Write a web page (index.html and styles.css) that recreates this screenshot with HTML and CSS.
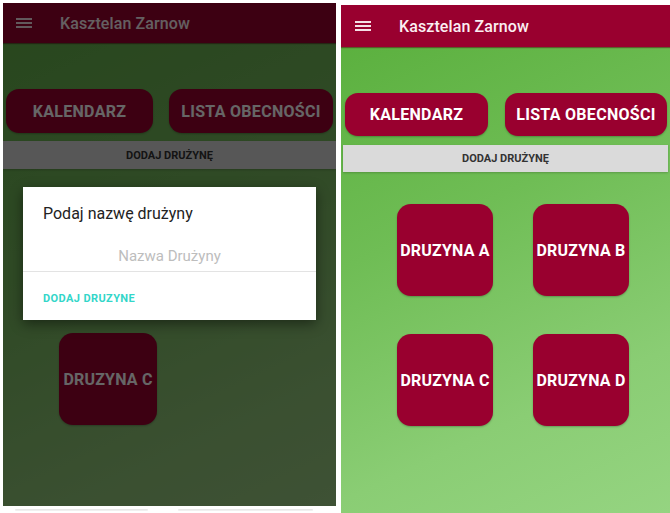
FILE: index.html
```html
<!DOCTYPE html>
<html lang="pl">
<head>
<meta charset="utf-8">
<title>Kasztelan Zarnow</title>
<link rel="stylesheet" href="styles.css">
</head>
<body>
<div class="stage">
  <div class="col-left">
    <div class="phone phone--dim">
      <header class="appbar">
        <span class="menu"><i></i><i></i><i></i></span>
        <span class="appbar-title">Kasztelan Zarnow</span>
      </header>
      <div class="actions">
        <div class="pill pill--cal">KALENDARZ</div>
        <div class="pill pill--list">LISTA OBECNOŚCI</div>
      </div>
      <div class="add-bar">DODAJ DRUŻYNĘ</div>
      <div class="teams">
        <div class="tile tile--covered"></div>
        <div class="tile tile--covered"></div>
        <div class="tile">DRUZYNA C</div>
      </div>
      <div class="scrim"></div>
      <div class="dialog">
        <div class="dialog-title">Podaj nazwę drużyny</div>
        <div class="dialog-input">Nazwa Drużyny</div>
        <div class="dialog-action">DODAJ DRUZYNE</div>
      </div>
    </div>
    <div class="under">
      <span class="under-line under-line--a"></span>
      <span class="under-line under-line--b"></span>
    </div>
  </div>

  <div class="phone phone--bright">
    <header class="appbar">
      <span class="menu"><i></i><i></i><i></i></span>
      <span class="appbar-title">Kasztelan Zarnow</span>
    </header>
    <div class="actions">
      <div class="pill pill--cal">KALENDARZ</div>
      <div class="pill pill--list">LISTA OBECNOŚCI</div>
    </div>
    <div class="add-bar">DODAJ DRUŻYNĘ</div>
    <div class="teams">
      <div class="tile">DRUZYNA A</div>
      <div class="tile">DRUZYNA B</div>
      <div class="tile">DRUZYNA C</div>
      <div class="tile">DRUZYNA D</div>
    </div>
  </div>
</div>
</body>
</html>
```
FILE: styles.css
```css
* { box-sizing: border-box; }

html, body {
  margin: 0;
  padding: 0;
  background: #ffffff;
  font-family: Roboto, "Liberation Sans", Arial, sans-serif;
  overflow: hidden;
}

.stage {
  display: flex;
  align-items: flex-start;
  width: 670px;
  height: 513px;
}

.col-left {
  display: flex;
  flex-direction: column;
  margin: 3px 0 0 3px;
  width: 333px;
}

.phone {
  position: relative;
  display: flex;
  flex-direction: column;
  overflow: hidden;
  background: linear-gradient(155deg, #58ae3b 0%, #6fbd55 40%, #8acd74 75%, #95d481 100%);
}

.phone--dim {
  width: 333px;
  height: 503px;
  --bar-h: 40px;
  --act-top: 46px;
  --act-pad: 3px;
  --act-gap: 16px;
  --pill-h: 44px;
  --cal-w: 147px;
  --list-w: 164px;
  --add-top: 8px;
  --add-h: 28px;
  --add-mx: 0px;
  --teams-top: 34px;
  --tile-w: 98px;
  --tile-gap-x: 38px;
  --menu-left: 13px;
  background: linear-gradient(155deg, #62b049 0%, #78b95f 45%, #92c77a 80%, #9ccc85 100%);
}

.phone--bright {
  width: 329px;
  height: 508px;
  margin: 5px 0 0 5px;
  --bar-h: 42px;
  --act-top: 46px;
  --act-pad: 4px;
  --act-gap: 17px;
  --pill-h: 43px;
  --cal-w: 143px;
  --list-w: 162px;
  --add-top: 9px;
  --add-h: 27px;
  --add-mx: 2px;
  --teams-top: 32px;
  --tile-w: 96px;
  --tile-gap-x: 40px;
  --menu-left: 14px;
}

.appbar {
  height: var(--bar-h);
  flex: none;
  display: flex;
  align-items: center;
  background: #99002f;
  box-shadow: 0 1px 1px rgba(80, 30, 20, 0.55);
  color: #fbeef2;
  position: relative;
  z-index: 1;
}

.menu {
  display: flex;
  flex-direction: column;
  gap: 2px;
  width: 16px;
  margin-left: var(--menu-left);
}

.menu i {
  display: block;
  height: 2px;
  background: #f5dfe6;
}

.appbar-title {
  margin-left: 28px;
  font-size: 16px;
  font-weight: 500;
  letter-spacing: 0.1px;
}

.actions {
  display: flex;
  gap: var(--act-gap);
  padding-left: var(--act-pad);
  margin-top: var(--act-top);
}

.pill {
  height: var(--pill-h);
  border-radius: 13px;
  background: #99002f;
  color: #ffffff;
  font-size: 16px;
  font-weight: 700;
  letter-spacing: 0.3px;
  display: flex;
  align-items: center;
  justify-content: center;
  box-shadow: 0 1px 2px rgba(0, 0, 0, 0.25);
}

.pill--cal { width: var(--cal-w); }
.pill--list { width: var(--list-w); }

.add-bar {
  margin: var(--add-top) var(--add-mx) 0;
  height: var(--add-h);
  background: #dadada;
  color: #333333;
  font-size: 11px;
  font-weight: 700;
  display: flex;
  align-items: center;
  justify-content: center;
  box-shadow: 0 1px 2px rgba(0, 0, 0, 0.2);
}

.teams {
  margin-top: var(--teams-top);
  padding-left: 56px;
  display: grid;
  grid-template-columns: var(--tile-w) var(--tile-w);
  column-gap: var(--tile-gap-x);
  row-gap: 38px;
}

.tile {
  height: 92px;
  border-radius: 14px;
  background: #99002f;
  color: #ffffff;
  font-size: 16px;
  font-weight: 700;
  letter-spacing: 0.2px;
  display: flex;
  align-items: center;
  justify-content: center;
  white-space: nowrap;
  box-shadow: 0 1px 2px rgba(0, 0, 0, 0.25);
}

.scrim {
  position: absolute;
  inset: 0;
  background: rgba(0, 0, 0, 0.6);
  z-index: 2;
}

.dialog {
  position: absolute;
  left: 20px;
  top: 184px;
  width: 293px;
  height: 133px;
  background: #ffffff;
  z-index: 3;
  display: flex;
  flex-direction: column;
  box-shadow: 0 4px 12px rgba(0, 0, 0, 0.45);
}

.dialog-title {
  padding: 17px 20px 0;
  font-size: 16px;
  line-height: 20px;
  color: #222222;
}

.dialog-input {
  margin-top: 22px;
  padding-bottom: 5px;
  line-height: 20px;
  text-align: center;
  font-size: 15px;
  color: #bdbdbd;
  border-bottom: 1px solid #e3e3e3;
}

.dialog-action {
  padding: 21px 0 0 20px;
  font-size: 11px;
  line-height: 12px;
  font-weight: 700;
  letter-spacing: 0.4px;
  color: #33d6c9;
}

.under {
  display: flex;
  gap: 30px;
  padding-left: 12px;
  margin-top: 3px;
}

.under-line {
  height: 2px;
  background: linear-gradient(#e4e4e4, #f4f4f4);
  border-radius: 1px;
}

.under-line--a { width: 133px; }
.under-line--b { width: 135px; }
```
